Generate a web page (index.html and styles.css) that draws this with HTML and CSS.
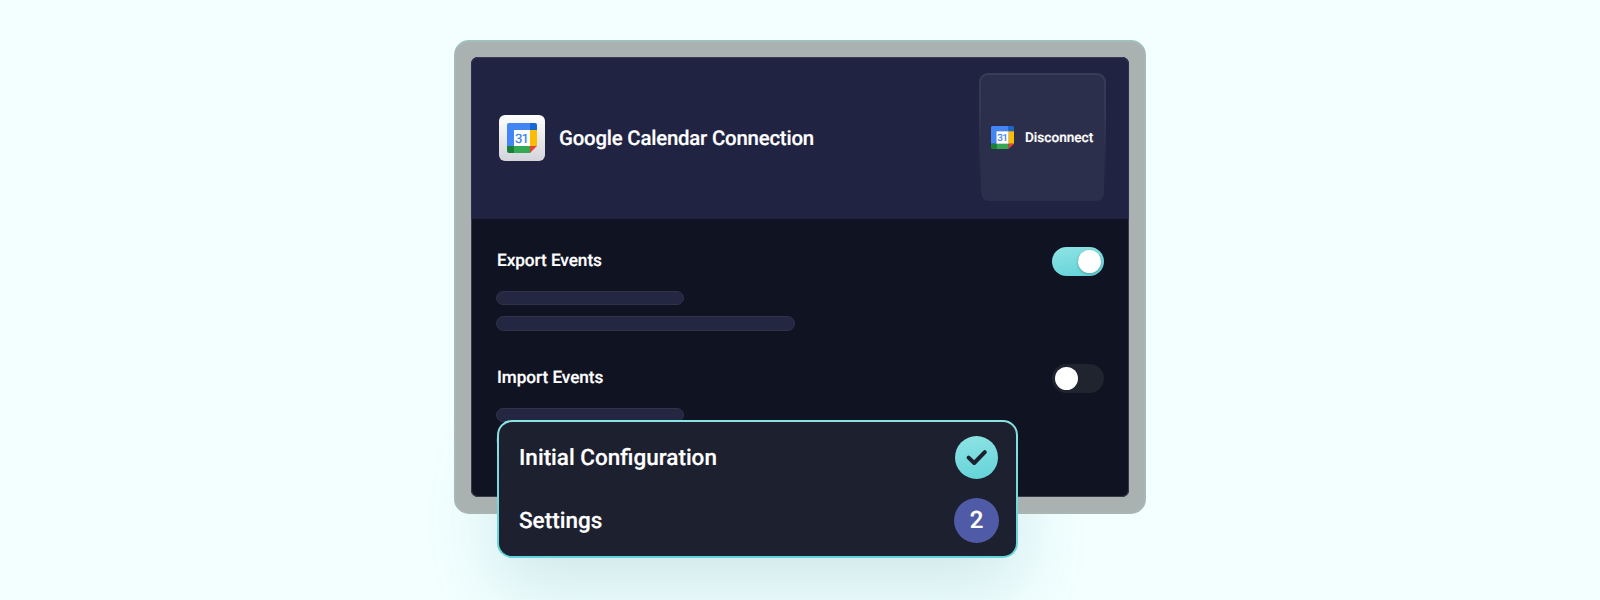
FILE: index.html
```html
<!DOCTYPE html>
<html lang="en">
<head>
    <meta charset="UTF-8">
    <title>Google Calendar Connection</title>
    <link rel="stylesheet" href="styles.css">
</head>
<body>
    <div class="frame">
        <div class="panel">
            <div class="panel-header">
                <div class="logo-tile">
                    <!-- Calendar logo -->
                    <svg width="30" height="30" viewBox="0 0 30 30">
                        <g id="calendar-logo">
                            <path d="M2 0H23V7H7V23H0V2A2 2 0 0 1 2 0Z" fill="#4285f4"/>
                            <path d="M23 0H28A2 2 0 0 1 30 2V7H23Z" fill="#1967d2"/>
                            <path d="M23 7H30V23H23Z" fill="#fbbc04"/>
                            <path d="M7 23H23V30H7Z" fill="#34a853"/>
                            <path d="M0 23H7V30H2A2 2 0 0 1 0 28Z" fill="#188038"/>
                            <path d="M23 23H30L23 30Z" fill="#ea4335"/>
                            <path d="M7 7H23V23H7Z" fill="#fff"/>
                        </g>
                        <text x="14.6" y="19.8" text-anchor="middle" class="logo-day">31</text>
                    </svg>
                </div>
                <h1>Google Calendar Connection</h1>
                <button class="disconnect">
                    <svg width="23" height="23" viewBox="0 0 30 30">
                        <use href="#calendar-logo"/>
                        <text x="14.6" y="19.8" text-anchor="middle" class="logo-day">31</text>
                    </svg>
                    <span>Disconnect</span>
                </button>
            </div>
            <div class="panel-body">
                <div class="setting">
                    <div>
                        <h2>Export Events</h2>
                        <div class="line short"></div>
                        <div class="line"></div>
                    </div>
                    <div class="toggle on"><span class="knob"></span></div>
                </div>
                <div class="setting">
                    <div>
                        <h2>Import Events</h2>
                        <div class="line short"></div>
                        <div class="line"></div>
                    </div>
                    <div class="toggle"><span class="knob"></span></div>
                </div>
            </div>
        </div>

        <!-- Steps card over the bottom of the frame -->
        <div class="steps">
            <div class="step">
                <span>Initial Configuration</span>
                <div class="badge done">
                    <svg width="43" height="43" viewBox="0 0 43 43">
                        <path d="M13.6 21.6L19.2 27L29.8 16.2" fill="none" stroke="#1d202e" stroke-width="4" stroke-linecap="round" stroke-linejoin="round"/>
                    </svg>
                </div>
            </div>
            <div class="step">
                <span>Settings</span>
                <div class="badge number">2</div>
            </div>
        </div>
    </div>
</body>
</html>
```

FILE: styles.css
```css
* {
    box-sizing: border-box;
}
body {
    margin: 0;
    height: 600px;
    padding-top: 40px;
    overflow: hidden;
    background-color: #f3ffff;
    font-family: Roboto, sans-serif;
    color: #fff;
    text-rendering: geometricPrecision;
}
h1, h2 {
    margin: 0;
    font-weight: 500;
    -webkit-text-stroke: 0.2px #fff;
}
.logo-day {
    font-size: 13px;
    font-weight: 500;
    letter-spacing: -0.8px;
    fill: #4285f4;
}
.frame {
    position: relative;
    width: 692px;
    height: 474px;
    margin: 0 auto;
    padding: 15px;
    border: 2px solid;
    border-color: #a1bfbf #a5b8b7 #a8b5b3;
    border-radius: 15px;
    background-color: #a9b2b0;
}
/* Glow of the steps card, kept behind the frame */
.frame::before {
    content: "";
    position: absolute;
    z-index: -1;
    left: 41px;
    top: 378px;
    width: 521px;
    height: 138px;
    border-radius: 15px;
    box-shadow: 0 30px 70px rgba(65,145,155,0.2);
}
.panel {
    height: 440px;
    border-radius: 7px;
    background-color: #101322;
    overflow: hidden;
    box-shadow: inset 0 0 0 1px #383a4c;
}
.panel-header {
    display: flex;
    align-items: center;
    height: 162px;
    padding: 0 23px 0 28px;
    background-color: #202342;
    border-radius: 7px 7px 0 0;
    box-shadow: inset 0 1px 0 #3a3c58, inset 1px 0 0 #2c2f4d, inset -1px 0 0 #2c2f4d;
}
.logo-tile {
    display: flex;
    align-items: center;
    justify-content: center;
    width: 46px;
    height: 46px;
    margin-right: 14px;
    border-radius: 6px;
    background: linear-gradient(#fff, #d3d4da);
}
h1 {
    font-size: 20.4px;
    line-height: 24px;
    letter-spacing: -0.21px;
}
.disconnect {
    display: flex;
    align-items: center;
    gap: 11px;
    width: 127px;
    height: 128px;
    margin: -2px 0 0 auto;
    padding: 0 0 1px 10px;
    border: 2px solid transparent;
    border-bottom-width: 0;
    border-radius: 9px;
    background: linear-gradient(#2c2f4b, #2c2f4b) padding-box, linear-gradient(#393c56, #353852 30%, #202342 90%) border-box;
    color: #fff;
    font-family: inherit;
    font-size: 13.6px;
    font-weight: 500;
    text-rendering: inherit;
    -webkit-text-stroke: 0.2px #fff;
}
.disconnect text {
    -webkit-text-stroke: 0;
}
.panel-body {
    padding: 24px 25px 0;
}
.setting {
    display: flex;
    justify-content: space-between;
    height: 117px;
}
h2 {
    padding: 6px 0 16.5px 1px;
    font-size: 17.2px;
    line-height: 25px;
    letter-spacing: -0.05px;
}
.line {
    width: 299px;
    height: 14.5px;
    margin-bottom: 11px;
    border: 1px solid #303349;
    border-radius: 8px;
    background-color: #232742;
}
.line.short {
    width: 188px;
}
.toggle {
    width: 52px;
    height: 29px;
    margin-top: 4.4px;
    padding: 3px;
    border-radius: 15px;
    background-color: #20242e;
}
.toggle.on {
    background: linear-gradient(170deg, #8fe3e4, #62d3d8);
}
.knob {
    display: block;
    width: 23px;
    height: 23px;
    border-radius: 50%;
    background-color: #fff;
}
.on .knob {
    margin-left: auto;
    box-shadow: 0 1px 3px rgba(0,0,0,0.25);
}
.steps {
    position: absolute;
    left: 41px;
    top: 378px;
    width: 521px;
    height: 138px;
    padding: 14px 17px 0 20px;
    border: 2px solid transparent;
    border-radius: 15px;
    background: linear-gradient(#1d202e, #1d202e) padding-box, linear-gradient(#8ae2e4, #62d3d8) border-box;
}
.step {
    display: flex;
    align-items: center;
    justify-content: space-between;
    height: 43px;
    margin-bottom: 20px;
    font-size: 22.5px;
    font-weight: 500;
    -webkit-text-stroke: 0.2px #fff;
}
.badge {
    display: flex;
    align-items: center;
    justify-content: center;
    border-radius: 50%;
}
.badge.done {
    width: 43px;
    height: 43px;
    margin-right: 1px;
    background: linear-gradient(170deg, #8fe3e4, #62d3d8);
}
.badge.number {
    width: 45px;
    height: 45px;
    padding-bottom: 1px;
    background-color: #4f5ba6;
    font-size: 24px;
}
```
